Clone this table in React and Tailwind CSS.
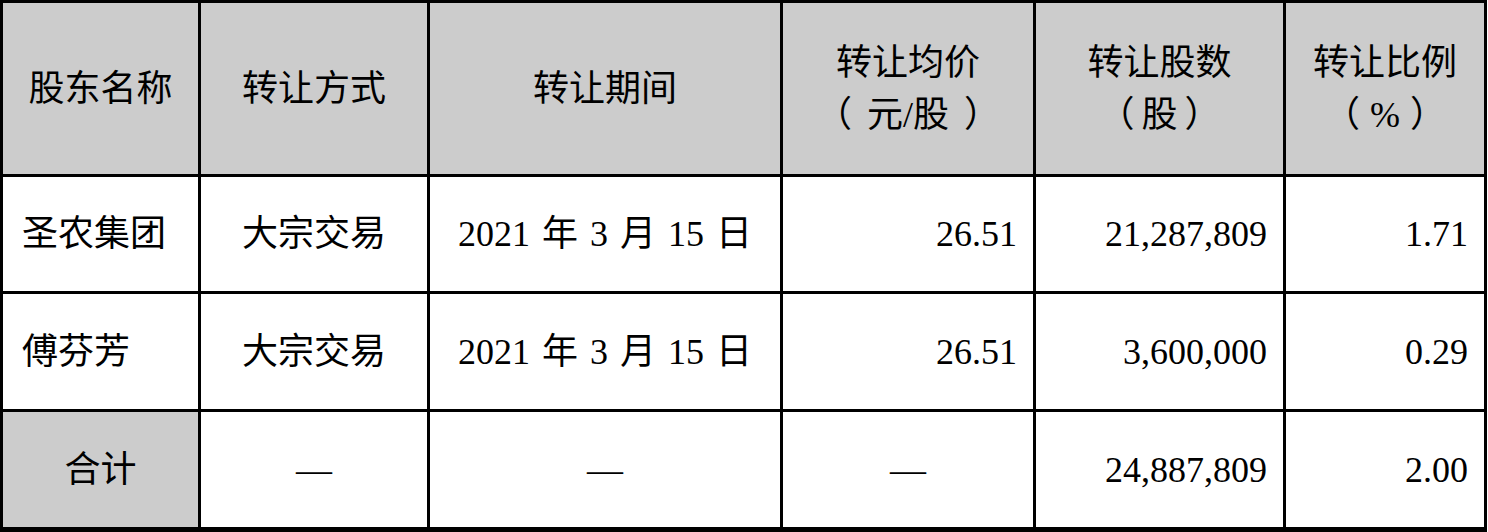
const headers = [
  { title: "股东名称" },
  { title: "转让方式" },
  { title: "转让期间" },
  { title: "转让均价", unit: "元/股", pad: "px-[15px]" },
  { title: "转让股数", unit: "股", pad: "px-[7px]" },
  { title: "转让比例", unit: "%", pad: "px-[10px]" },
];

const rows = [
  ["圣农集团", "大宗交易", "2021 年 3 月 15 日", "26.51", "21,287,809", "1.71"],
  ["傅芬芳", "大宗交易", "2021 年 3 月 15 日", "26.51", "3,600,000", "0.29"],
];

const Cell = ({ className = "", children }) => (
  <div className={`flex items-center bg-white ${className}`}>{children}</div>
);

const App = () => {
  return (
    <div
      className="w-[1488px] h-[532px] bg-white text-black text-[36px] leading-[52px]"
      style={{ fontFamily: '"Liberation Serif", "Noto Sans CJK SC", serif' }}
    >
      <div className="grid w-[1487px] grid-cols-[195px_226px_350px_250px_247px_198px] grid-rows-[171px_114px_115px_115px] gap-[3px] bg-black pt-[3px] pl-[3px] pr-[3px] pb-[5px]">
        {headers.map((h, i) => (
          <div
            key={i}
            className="flex flex-col items-center justify-center bg-[#cccccc] text-center"
          >
            <span>{h.title}</span>
            {h.unit && (
              <span>
                （<span className={h.pad}>{h.unit}</span>）
              </span>
            )}
          </div>
        ))}

        {rows.map((r, ri) => (
          <div key={ri} className="contents">
            <Cell className="pl-[19px]">{r[0]}</Cell>
            <Cell className="justify-center">{r[1]}</Cell>
            <Cell className="justify-center [word-spacing:3px]">{r[2]}</Cell>
            <Cell className="justify-end pr-[16px]">{r[3]}</Cell>
            <Cell className="justify-end pr-[16px]">{r[4]}</Cell>
            <Cell className="justify-end pr-[16px]">{r[5]}</Cell>
          </div>
        ))}

        <div className="flex items-center justify-center bg-[#cccccc]">合计</div>
        <Cell className="justify-center">—</Cell>
        <Cell className="justify-center">—</Cell>
        <Cell className="justify-center">—</Cell>
        <Cell className="justify-end pr-[16px]">24,887,809</Cell>
        <Cell className="justify-end pr-[16px]">2.00</Cell>
      </div>
    </div>
  );
};

export default App;
